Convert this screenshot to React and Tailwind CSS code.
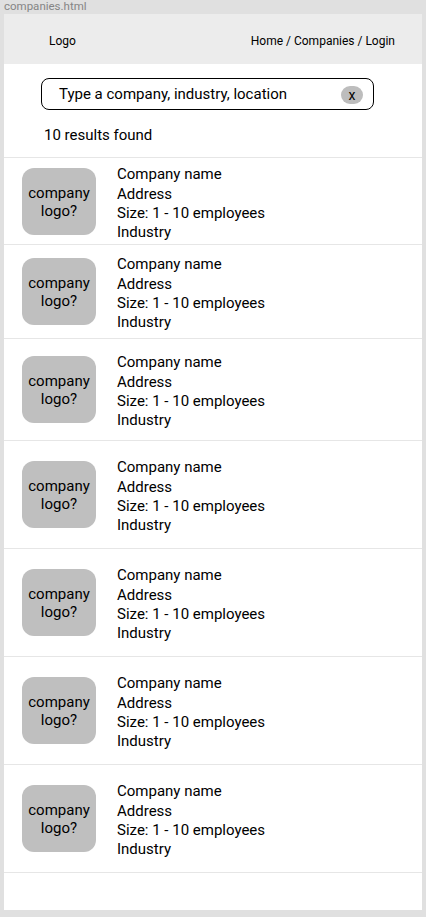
const rows = [
  { h: "h-[87px]" },
  { h: "h-[94px]" },
  { h: "h-[102px]" },
  { h: "h-[108px]" },
  { h: "h-[108px]" },
  { h: "h-[108px]" },
  { h: "h-[108px]" },
];

const App = () => {
  return (
    <div
      className="min-h-[917px] bg-[#e0e0e0] px-[4px] pb-[7px] text-black"
      style={{ fontFamily: "Roboto, Arial, sans-serif" }}
    >
      <div className="h-[14px] text-[11.5px] leading-[13px] text-[#858585]">
        companies.html
      </div>

      <div className="h-[896px] bg-white">
        {/* HEADER */}
        <div className="flex h-[50px] items-center justify-between bg-[#ececec] pl-[45px] pr-[27px] pt-[4px] text-[12px]">
          <span>Logo</span>
          <span>Home / Companies / Login</span>
        </div>

        {/* SEARCH */}
        <div className="ml-[37px] mt-[14px] flex h-[32px] w-[333px] items-center justify-between rounded-[8px] border border-black pl-[17px] pr-[10px] pt-[1px] text-[15px]">
          <span>Type a company, industry, location</span>
          <span className="flex h-[18px] w-[22px] items-center justify-center rounded-full bg-[#bdbdbd] text-[14px] leading-none">
            x
          </span>
        </div>

        <div className="h-[47px] pl-[40px] pt-[15px] text-[15px] leading-[20px]">
          10 results found
        </div>

        {/* RESULTS */}
        <div className="border-b border-[#e6e6e6]">
          {rows.map((row, index) => (
            <div
              key={index}
              className={`flex items-center border-t border-[#e6e6e6] pl-[18px] ${row.h}`}
            >
              <div className="flex h-[67px] w-[74px] shrink-0 items-center justify-center rounded-[12px] bg-[#bfbfbf] pt-[1px] text-center text-[15px] leading-[18px]">
                company
                <br />
                logo?
              </div>
              <div className="ml-[21px] mt-[4px] text-[15px] leading-[19px]">
                <div className="mb-[1px]">Company name</div>
                <div>Address</div>
                <div>Size: 1 - 10 employees</div>
                <div>Industry</div>
              </div>
            </div>
          ))}
        </div>
      </div>
    </div>
  );
};

export default App;
